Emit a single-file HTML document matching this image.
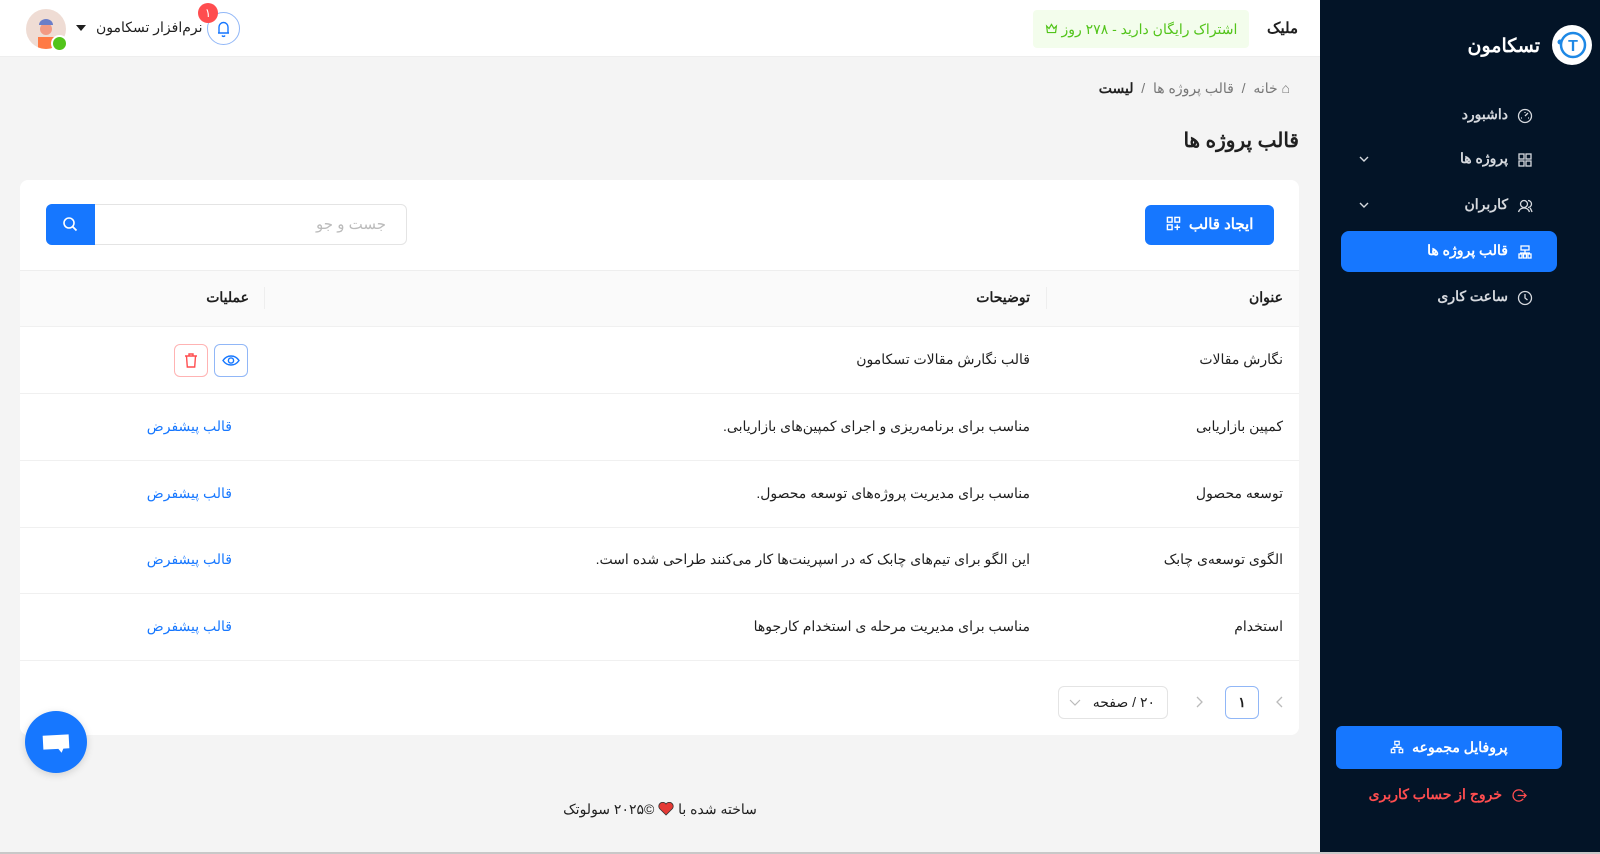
<!DOCTYPE html>
<html lang="fa" dir="rtl"><head><meta charset="utf-8">
<style>
*{box-sizing:border-box;margin:0;padding:0}
body{width:1600px;height:854px;overflow:hidden;background:#f4f4f4;font-family:"Liberation Sans","Noto Sans CJK SC",sans-serif;font-size:14px;color:#1f1f1f;position:relative}
.a{position:absolute}
.side{left:1320px;top:0;width:280px;height:852px;background:#031427;color:#d6d9de}
.nav{position:absolute;left:0;width:280px;height:44px;font-size:14px;color:#d6d9de;font-weight:bold}
.nav .ic{position:absolute;right:67px;top:14px}
.nav .t{position:absolute;right:92px;top:12px}
.nav .ch{position:absolute;left:38px;top:15px}
.hdr{left:0;top:0;width:1320px;height:57px;background:#fff;border-bottom:1px solid #eee}
.card{left:20px;top:180px;width:1279px;height:555px;background:#fff;border-radius:8px;overflow:hidden}
.row{position:absolute;left:0;width:1279px;height:67px;border-bottom:1px solid #f0f0f0}
.row span{position:absolute;top:24px;font-size:14px}
.link{color:#1677ff}
</style></head><body>
<div class="a side">
  <div class="a" style="right:8px;top:25px;width:40px;height:40px;border-radius:50%;background:#fff"><svg width="40" height="40"><circle cx="21" cy="20" r="12" fill="none" stroke="#1e88e5" stroke-width="2.5"/><text x="21" y="26" text-anchor="middle" font-size="16" font-weight="bold" fill="#1e88e5" font-family="Liberation Sans">T</text><circle cx="8" cy="17" r="2.5" fill="#1e88e5"/></svg></div>
  <div class="a" style="right:60px;top:35px;font-size:19px;font-weight:bold;color:#fff">تسکامون</div>
  <div class="nav" style="top:94px"><svg class="ic" width="16" height="16" viewBox="0 0 16 16" fill="none" stroke="#d6d9de" stroke-width="1.3"><circle cx="8" cy="8" r="6.5"/><path d="M8 8l3-3M4 10h1M11 10h1M8 4v1"/></svg><span class="t">داشبورد</span></div>
  <div class="nav" style="top:138px"><svg class="ic" width="16" height="16" viewBox="0 0 16 16" fill="none" stroke="#d6d9de" stroke-width="1.3"><rect x="2" y="2" width="5" height="5"/><rect x="9" y="2" width="5" height="5"/><rect x="2" y="9" width="5" height="5"/><rect x="9" y="9" width="5" height="5"/></svg><span class="t">پروژه ها</span><svg class="ch" width="12" height="12" viewBox="0 0 12 12"><path d="M2 4l4 4 4-4" stroke="#d6d9de" fill="none" stroke-width="1.4"/></svg></div>
  <div class="nav" style="top:184px"><svg class="ic" width="16" height="16" viewBox="0 0 16 16" fill="none" stroke="#d6d9de" stroke-width="1.3"><circle cx="7" cy="6" r="3.5"/><path d="M1.5 14c1-3 3-4 5.5-4s4.5 1 5.5 4M11 2.5a3.5 3.5 0 010 7M13 10c1 1 1.5 2.5 2 4"/></svg><span class="t">کاربران</span><svg class="ch" width="12" height="12" viewBox="0 0 12 12"><path d="M2 4l4 4 4-4" stroke="#d6d9de" fill="none" stroke-width="1.4"/></svg></div>
  <div class="a" style="left:21px;top:231px;width:216px;height:41px;background:#1677ff;border-radius:8px"></div>
  <div class="nav" style="top:230px;color:#fff"><svg class="ic" width="16" height="16" viewBox="0 0 16 16" fill="none" stroke="#fff" stroke-width="1.3"><rect x="4" y="2" width="8" height="4"/><path d="M8 6v3M3 9h10"/><rect x="2" y="10" width="3" height="4"/><rect x="6.5" y="10" width="3" height="4"/><rect x="11" y="10" width="3" height="4"/></svg><span class="t" style="color:#fff">قالب پروژه ها</span></div>
  <div class="nav" style="top:276px"><svg class="ic" width="16" height="16" viewBox="0 0 16 16" fill="none" stroke="#d6d9de" stroke-width="1.3"><circle cx="8" cy="8" r="6.5"/><path d="M8 4v4l2.5 2"/></svg><span class="t">ساعت کاری</span></div>
  <div class="a" style="left:16px;top:726px;width:226px;height:43px;background:#1677ff;border-radius:6px;color:#fff;text-align:center;line-height:43px;font-size:14px;font-weight:bold">پروفایل مجموعه &nbsp;<svg width="14" height="14" viewBox="0 0 16 16" fill="none" stroke="#fff" stroke-width="1.4" style="vertical-align:-2px"><rect x="5.5" y="1.5" width="5" height="4"/><path d="M8 5.5v3M3.5 8.5h9v2M3.5 8.5v2"/><rect x="1.5" y="10.5" width="4" height="4"/><rect x="10.5" y="10.5" width="4" height="4"/></svg></div>
  <div class="a" style="right:98px;top:786px;color:#ff4d4f;font-size:14px;font-weight:bold;white-space:nowrap">خروج از حساب کاربری</div>
  <svg class="a" style="left:192px;top:788px" width="15" height="15" viewBox="0 0 16 16" fill="none" stroke="#ff4d4f" stroke-width="1.4"><path d="M12 4.5A6 6 0 1 0 12 11.5M6 8h9M12.5 5.5L15 8l-2.5 2.5"/></svg>
</div>
<div class="a" style="left:0;top:852px;width:1600px;height:2px;background:#c8c8c8"></div>

<div class="a hdr">
  <div class="a" style="right:22px;top:19px;font-size:15px;font-weight:bold">ملیک</div>
  <div class="a" style="left:1033px;top:10px;width:216px;height:38px;background:#f3fdec;border-radius:4px;color:#52c41a;font-size:14px;line-height:38px;text-align:center">اشتراک رایگان دارید - ۲۷۸ روز <svg width="13" height="13" viewBox="0 0 16 16" fill="none" stroke="#52c41a" stroke-width="1.5" style="vertical-align:-1px"><path d="M2 5l3 3 3-5 3 5 3-3-1 8H3z"/></svg></div>
  <div class="a" style="left:207px;top:12px;width:33px;height:33px;border:1px solid #91b7f7;border-radius:50%"><svg width="31" height="31" viewBox="0 0 31 31" fill="none" stroke="#1677ff" stroke-width="1.4"><path d="M10 20h11M11 20v-6a4.5 4.5 0 019 0v6M14 22.5a1.7 1.7 0 003 0"/></svg></div>
  <div class="a" style="left:198px;top:3px;width:20px;height:20px;border-radius:50%;background:#ff4d4f;color:#fff;font-size:12px;text-align:center;line-height:20px">۱</div>
  <div class="a" style="left:96px;top:19px;font-size:14px">نرم‌افزار تسکامون</div>
  <svg class="a" style="left:76px;top:25px" width="10" height="8"><path d="M0 0h10L5 6z" fill="#1f1f1f"/></svg>
  <div class="a" style="left:26px;top:9px;width:40px;height:40px;border-radius:50%;background:#efdcd4;overflow:hidden"><svg width="40" height="40"><rect x="12" y="28" width="16" height="14" fill="#ff7a45"/><circle cx="20" cy="20" r="6" fill="#f29a84"/><path d="M13 16a7 6 0 0114 0z" fill="#6b7ec9"/></svg></div>
  <div class="a" style="left:51px;top:35px;width:17px;height:17px;border-radius:50%;background:#52c41a;border:2px solid #fff"></div>
</div>

<div class="a" style="right:310px;top:80px;font-size:14px;color:#777;white-space:nowrap"><span style="color:#777">⌂ خانه</span> &nbsp;/&nbsp; <span>قالب پروژه ها</span> &nbsp;/&nbsp; <span style="color:#1f1f1f;font-weight:bold">لیست</span></div>
<div class="a" style="right:301px;top:128px;font-size:20px;font-weight:bold">قالب پروژه ها</div>

<div class="a card">
  <div class="a" style="left:1125px;top:25px;width:129px;height:40px;background:#1677ff;border-radius:6px;color:#fff;font-size:15px;font-weight:bold;text-align:center;line-height:40px">ایجاد قالب &nbsp;<svg width="15" height="15" viewBox="0 0 16 16" fill="none" stroke="#fff" stroke-width="1.5" style="vertical-align:-2px"><rect x="1.5" y="1.5" width="5" height="5"/><rect x="9.5" y="1.5" width="5" height="5"/><rect x="1.5" y="9.5" width="5" height="5"/><path d="M12 9v6M9 12h6"/></svg></div>
  <div class="a" style="left:26px;top:24px;width:361px;height:41px;border:1px solid #e4e4e4;border-radius:6px"></div>
  <div class="a" style="left:26px;top:24px;width:49px;height:41px;background:#1677ff;border-radius:6px 0 0 6px"><svg width="49" height="41"><circle cx="23" cy="19" r="5" fill="none" stroke="#fff" stroke-width="1.6"/><path d="M26.5 22.5l4 4" stroke="#fff" stroke-width="1.8"/></svg></div>
  <div class="a" style="right:913px;top:35px;color:#bbb;font-size:15px">جست و جو</div>

  <div class="a" style="left:0;top:90px;width:1279px;height:57px;background:#fafafa;border-top:1px solid #eee;border-bottom:1px solid #f0f0f0"></div>
  <div class="a" style="left:1026px;top:107px;width:1px;height:22px;background:#eee"></div>
  <div class="a" style="left:244px;top:107px;width:1px;height:22px;background:#eee"></div>
  <div class="a" style="right:16px;top:109px;font-weight:bold">عنوان</div>
  <div class="a" style="right:269px;top:109px;font-weight:bold">توضیحات</div>
  <div class="a" style="right:1050px;top:109px;font-weight:bold">عملیات</div>

  <div class="row" style="top:147px"><span style="right:16px">نگارش مقالات</span><span style="right:269px">قالب نگارش مقالات تسکامون</span>
    <div class="a" style="left:194px;top:17px;width:34px;height:33px;border:1px solid #91b7f7;border-radius:6px"><svg width="32" height="31"><path d="M8 15.5c4-6 12-6 16 0c-4 6-12 6-16 0z" fill="none" stroke="#1677ff" stroke-width="1.4"/><circle cx="16" cy="15.5" r="2.6" fill="none" stroke="#1677ff" stroke-width="1.4"/></svg></div>
    <div class="a" style="left:154px;top:17px;width:34px;height:33px;border:1px solid #ffb3b3;border-radius:6px"><svg width="32" height="31"><path d="M10 11h12M14 11V9h4v2M11.5 11l.8 11h7.4l.8-11" fill="none" stroke="#ff4d4f" stroke-width="1.4"/></svg></div>
  </div>
  <div class="row" style="top:214px"><span style="right:16px">کمپین بازاریابی</span><span style="right:269px">مناسب برای برنامه‌ریزی و اجرای کمپین‌های بازاریابی.</span><span class="link" style="right:1067px">قالب پیشفرض</span></div>
  <div class="row" style="top:281px"><span style="right:16px">توسعه محصول</span><span style="right:269px">مناسب برای مدیریت پروژه‌های توسعه محصول.</span><span class="link" style="right:1067px">قالب پیشفرض</span></div>
  <div class="row" style="top:347px"><span style="right:16px">الگوی توسعه‌ی چابک</span><span style="right:269px">این الگو برای تیم‌های چابک که در اسپرینت‌ها کار می‌کنند طراحی شده است.</span><span class="link" style="right:1067px">قالب پیشفرض</span></div>
  <div class="row" style="top:414px"><span style="right:16px">استخدام</span><span style="right:269px">مناسب برای مدیریت مرحله ی استخدام کارجوها</span><span class="link" style="right:1067px">قالب پیشفرض</span></div>

  <svg class="a" style="left:1255px;top:515px" width="10" height="14"><path d="M7 2L2 7l5 5" stroke="#bbb" fill="none" stroke-width="1.3"/></svg>
  <div class="a" style="left:1205px;top:506px;width:34px;height:33px;border:1px solid #91b7f7;border-radius:6px;text-align:center;line-height:31px;font-weight:bold">۱</div>
  <svg class="a" style="left:1174px;top:515px" width="10" height="14"><path d="M3 2l5 5-5 5" stroke="#bbb" fill="none" stroke-width="1.3"/></svg>
  <div class="a" style="left:1038px;top:506px;width:110px;height:33px;border:1px solid #e4e4e4;border-radius:6px"><span class="a" style="right:12px;top:7px">۲۰ / صفحه</span><svg class="a" style="left:10px;top:11px" width="12" height="10"><path d="M1 2l5 5 5-5" stroke="#bbb" fill="none" stroke-width="1.2"/></svg></div>
</div>

<div class="a" style="left:25px;top:711px;width:62px;height:62px;border-radius:50%;background:#1677ff;box-shadow:0 2px 8px rgba(0,0,0,.15)"><svg width="62" height="62"><path d="M18 24h26v14H38l-2 4-3-4H18z" fill="#fff" transform="rotate(-3 31 31)"/></svg></div>

<div class="a" style="left:555px;top:801px;width:210px;text-align:center;font-size:14px">ساخته شده با <svg width="16" height="14" viewBox="0 0 16 14" style="vertical-align:-2px"><path d="M8 13L1.5 6.5A3.5 3.5 0 018 2a3.5 3.5 0 016.5 4.5z" fill="#e53935" stroke="#333" stroke-width=".8"/></svg> ©۲۰۲۵ سولوتک</div>
</body></html>
